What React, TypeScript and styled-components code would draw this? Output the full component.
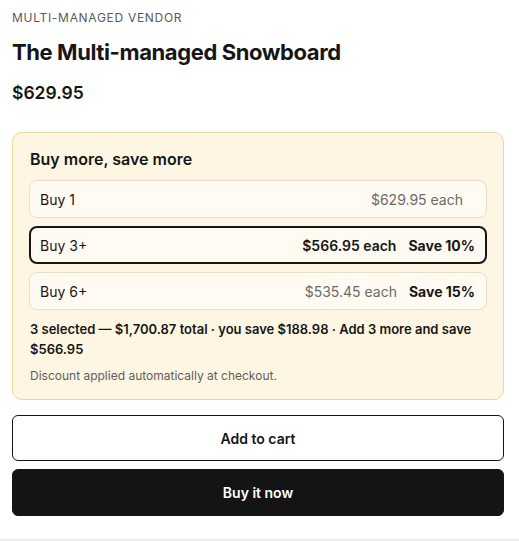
import React from "react";
import styled, { createGlobalStyle } from "styled-components";

const GlobalStyle = createGlobalStyle`
  body {
    margin: 0;
    background: #ffffff;
    font-family: Inter, "Noto Sans", "Liberation Sans", sans-serif;
    color: #161616;
  }
`;

const Page = styled.div`
  width: 492px;
  padding: 10px 15px 0 12px;
`;

const Vendor = styled.div`
  font-size: 12px;
  line-height: 16px;
  letter-spacing: 0.7px;
  text-transform: uppercase;
  color: #5a5a5a;
`;

const Title = styled.h1`
  margin: 12px 0 0;
  font-size: 22px;
  line-height: 28px;
  font-weight: 700;
  letter-spacing: -0.4px;
`;

const Price = styled.div`
  margin-top: 15px;
  font-size: 17.5px;
  line-height: 24px;
  font-weight: 600;
`;

const Offer = styled.section`
  margin-top: 27px;
  padding: 16px 16px 15px 16px;
  background: #fef6e3;
  border: 1px solid #ecd89f;
  border-radius: 10px;
`;

const OfferHeading = styled.h2`
  margin: 0 0 0 1px;
  font-size: 16px;
  line-height: 20px;
  font-weight: 600;
`;

const Tiers = styled.div`
  margin-top: 11px;
  display: flex;
  flex-direction: column;
  gap: 8px;
`;

const Tier = styled.div<{ $active?: boolean }>`
  height: 38px;
  box-sizing: border-box;
  display: flex;
  align-items: center;
  justify-content: space-between;
  padding: ${(p) => (p.$active ? "0 10px 0 9px" : "0 11px 0 10px")};
  background: #fffbf2;
  border: ${(p) => (p.$active ? "2px solid #161616" : "1px solid #e8dfcb")};
  border-radius: 8px;
  font-size: 14px;
`;

const TierRight = styled.div`
  display: flex;
  align-items: center;
  gap: 12px;
`;

const Each = styled.span<{ $active?: boolean }>`
  color: ${(p) => (p.$active ? "#161616" : "#6b6b6b")};
  font-weight: ${(p) => (p.$active ? 600 : 400)};
`;

const Save = styled.span`
  font-weight: 700;
`;

const Summary = styled.p`
  margin: 9px 0 0 1px;
  font-size: 13px;
  line-height: 20px;
  font-weight: 600;
`;

const Note = styled.p`
  margin: 9px 0 0 1px;
  font-size: 12px;
  line-height: 16px;
  color: #5e5e5e;
`;

const Actions = styled.div`
  margin-top: 15px;
  display: flex;
  flex-direction: column;
  gap: 8px;
`;

const Button = styled.button<{ $primary?: boolean }>`
  height: ${(p) => (p.$primary ? "47px" : "46px")};
  width: 100%;
  border-radius: 6px;
  font-family: inherit;
  font-size: 14px;
  font-weight: 600;
  cursor: pointer;
  background: ${(p) => (p.$primary ? "#141414" : "#ffffff")};
  color: ${(p) => (p.$primary ? "#ffffff" : "#161616")};
  border: 1px solid #141414;
`;

const Divider = styled.hr`
  margin: 23px 0 0;
  border: 0;
  border-top: 2px solid #ececec;
`;

const tiers = [
  { label: "Buy 1", each: "$629.95 each", save: "" },
  { label: "Buy 3+", each: "$566.95 each", save: "Save 10%", active: true },
  { label: "Buy 6+", each: "$535.45 each", save: "Save 15%" },
];

export default function App() {
  return (
    <>
      <GlobalStyle />
      <Page>
        <Vendor>Multi-managed Vendor</Vendor>
        <Title>The Multi-managed Snowboard</Title>
        <Price>$629.95</Price>
        <Offer>
          <OfferHeading>Buy more, save more</OfferHeading>
          <Tiers>
            {tiers.map((t) => (
              <Tier key={t.label} $active={t.active}>
                <span>{t.label}</span>
                <TierRight>
                  <Each $active={t.active}>{t.each}</Each>
                  <Save>{t.save}</Save>
                </TierRight>
              </Tier>
            ))}
          </Tiers>
          <Summary>
            3 selected — $1,700.87 total · you save $188.98 · Add 3 more and save $566.95
          </Summary>
          <Note>Discount applied automatically at checkout.</Note>
        </Offer>
        <Actions>
          <Button>Add to cart</Button>
          <Button $primary>Buy it now</Button>
        </Actions>
      </Page>
      <Divider />
    </>
  );
}
